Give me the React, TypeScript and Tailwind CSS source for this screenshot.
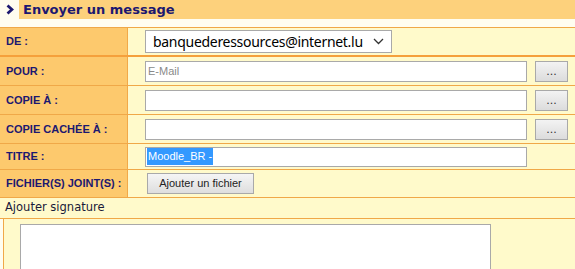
import React from "react";

const label = "flex items-center whitespace-nowrap border-r border-[#f2a948] bg-[#fdc96d] pl-[6px] font-['Liberation_Sans',sans-serif] text-[11px] font-bold text-[#1c1870]";
const cell = "flex items-center bg-[#fffacb] pl-[17px]";
const field = "h-[21px] w-[382px] border border-[#a9a9a9] bg-white px-[2px] font-['Liberation_Sans',sans-serif] text-[11px] text-[#6d6d6d] outline-none placeholder:text-[#8a8a8a]";

function DotsButton() {
  return (
    <button className="ml-[8px] h-[21px] w-[33px] border border-[#a9a9a9] bg-gradient-to-b from-[#f3f3f3] to-[#dcdcdc] text-[11px] leading-none text-[#333]">
      ...
    </button>
  );
}

function Row({ title, h, children }: { title: string; h: string; children: React.ReactNode }) {
  return (
    <div className={`grid grid-cols-[128px_1fr] border-b border-[#f0a848] ${h}`}>
      <div className={label}>{title}</div>
      <div className={cell}>{children}</div>
    </div>
  );
}

export default function App() {
  return (
    <div className="h-[269px] w-[575px] overflow-hidden bg-[#fffdf0] font-['DejaVu_Sans',sans-serif]">
      {/* title bar */}
      <div className="flex h-[19px] items-center">
        <div className="flex h-full w-[19px] items-center justify-center">
          <svg width="8" height="11" viewBox="0 0 8 11">
            <path d="M1.5 1.5 L6 5.5 L1.5 9.5" fill="none" stroke="#1c1870" strokeWidth="2.8" />
          </svg>
        </div>
        <div className="flex h-full flex-1 items-center bg-[#fdd17c] pl-[4px] text-[13px] font-bold text-[#1c1870]">
          Envoyer un message
        </div>
      </div>

      <div className="mt-[8px] border-t border-[#f0a848]">
        <div className="grid h-[29px] grid-cols-[128px_1fr] border-b-2 border-[#f5a03c]">
          <div className={label}>DE :</div>
          <div className={cell}>
            <div className="flex h-[23px] w-[247px] items-center justify-between whitespace-nowrap border border-[#a9a9a9] bg-white pl-[7px] pr-[7px] font-['Noto_Sans',sans-serif] text-[14px] tracking-[-0.3px] text-black">
              <span>banquederessources@internet.lu</span>
              <svg width="11" height="7" viewBox="0 0 11 7">
                <path d="M1 1 L5.5 5.5 L10 1" fill="none" stroke="#333" strokeWidth="1.3" />
              </svg>
            </div>
          </div>
        </div>

        <Row title="POUR :" h="h-[29px]">
          <input className={field} placeholder="E-Mail" />
          <DotsButton />
        </Row>
        <Row title="COPIE À :" h="h-[29px]">
          <input className={field} />
          <DotsButton />
        </Row>
        <Row title="COPIE CACHÉE À :" h="h-[29px]">
          <input className={field} />
          <DotsButton />
        </Row>
        <Row title="TITRE :" h="h-[26px]">
          <div className="flex h-[20px] w-[382px] items-center border border-[#a9a9a9] bg-white px-[1px] font-['Liberation_Sans',sans-serif] text-[11px]">
            <span className="bg-[#3399ff] px-[1px] text-white">Moodle_BR -</span>
          </div>
        </Row>
        <Row title="FICHIER(S) JOINT(S) :" h="h-[28px]">
          <button className="ml-[2px] h-[21px] w-[107px] border border-[#a9a9a9] bg-gradient-to-b from-[#f5f5f5] to-[#dedede] font-['Liberation_Sans',sans-serif] text-[11px] text-[#222]">
            Ajouter un fichier
          </button>
        </Row>

        <div className="flex h-[21px] items-center border-b border-[#f0a848] bg-[#fffacb] pl-[5px] text-[11.5px] text-[#1a1a3a]">
          Ajouter signature
        </div>
        <div className="ml-[3px] h-[60px] border-l border-[#f0a848] bg-[#fffacb] pl-[16px] pt-[5px]">
          <div className="h-[60px] w-[471px] border border-[#a9a9a9] bg-white" />
        </div>
      </div>
    </div>
  );
}
